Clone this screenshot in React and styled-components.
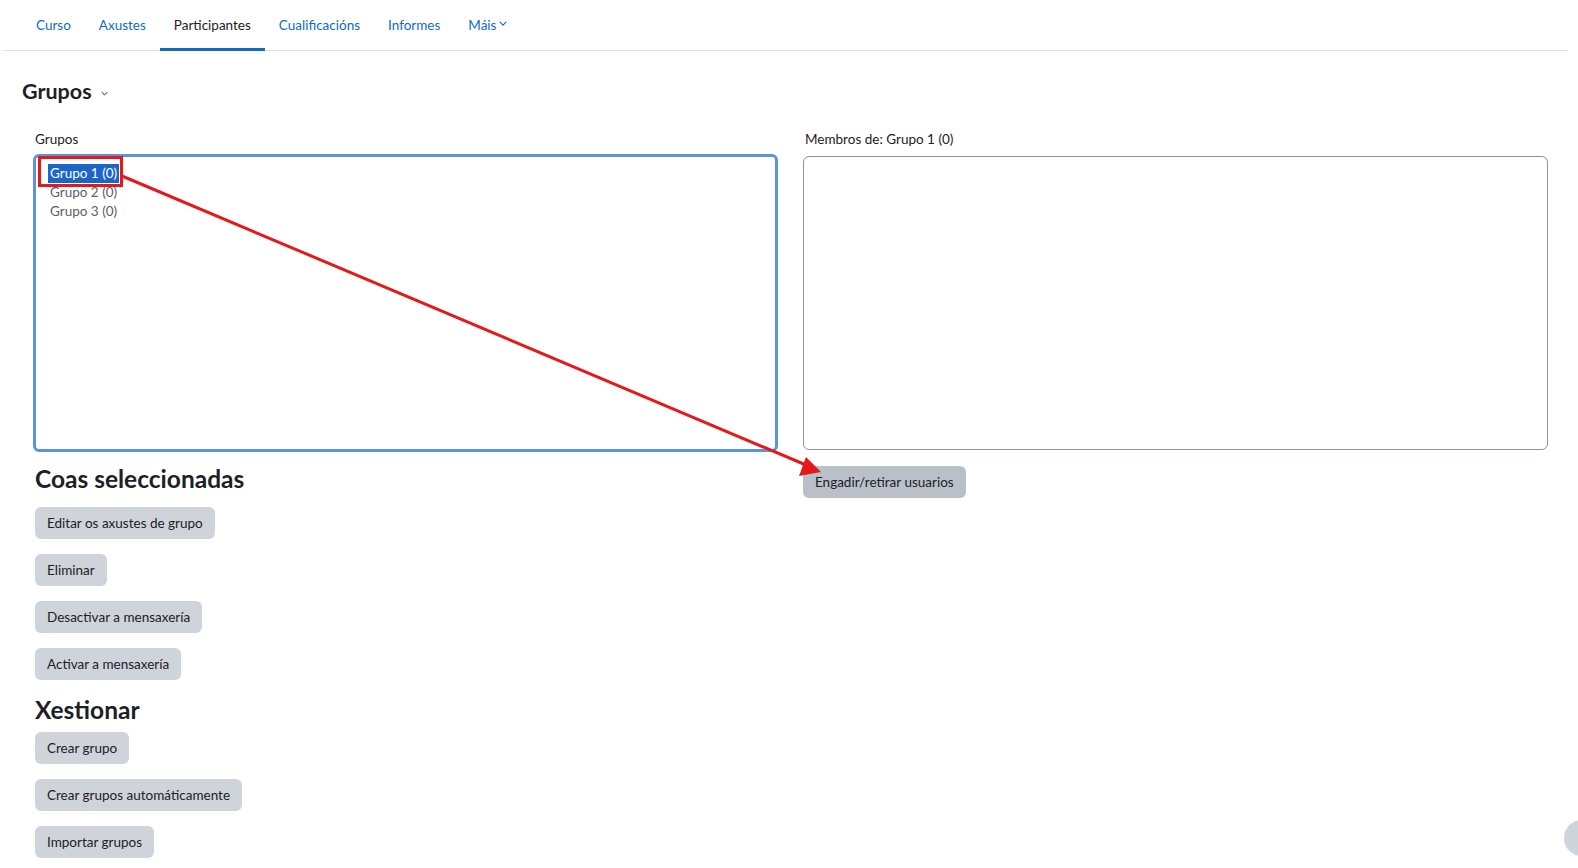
import React from "react";
import styled, { createGlobalStyle } from "styled-components";

const GlobalStyle = createGlobalStyle`
  html, body {
    margin: 0;
    padding: 0;
    background: #fff;
    overflow: hidden;
  }
  body {
    font-family: Lato, "Noto Sans", sans-serif;
    font-size: 13.5px;
    color: #1d2125;
  }
`;

const tabs = ["Curso", "Axustes", "Participantes", "Cualificacións", "Informes", "Máis"];
const groups = ["Grupo 1 (0)", "Grupo 2 (0)", "Grupo 3 (0)"];

const App = () => {
  return (
    <Page>
      <GlobalStyle />
      <Nav>
        {tabs.map((t) => (
          <Tab key={t} active={t === "Participantes"}>
            {t}
            {t === "Máis" && <Caret viewBox="0 0 10 6"><path d="M1 1l4 4 4-4" /></Caret>}
          </Tab>
        ))}
      </Nav>

      <Title>
        Grupos
        <TitleCaret viewBox="0 0 10 6"><path d="M1 1l4 4 4-4" /></TitleCaret>
      </Title>

      <Columns>
        <Column>
          <Label>Grupos</Label>
          <ListBox focused>
            {groups.map((g, i) => (
              <Option key={g} selected={i === 0}>{g}</Option>
            ))}
          </ListBox>

          <Heading>Coas seleccionadas</Heading>
          <Buttons>
            <Button>Editar os axustes de grupo</Button>
            <Button>Eliminar</Button>
            <Button>Desactivar a mensaxería</Button>
            <Button>Activar a mensaxería</Button>
          </Buttons>

          <Heading tight>Xestionar</Heading>
          <Buttons>
            <Button>Crear grupo</Button>
            <Button>Crear grupos automáticamente</Button>
            <Button>Importar grupos</Button>
          </Buttons>
        </Column>

        <Column>
          <Label>Membros de: Grupo 1 (0)</Label>
          <ListBox />
          <ActionRow>
            <Button dark>Engadir/retirar usuarios</Button>
          </ActionRow>
        </Column>
      </Columns>

      <Annotation viewBox="0 0 1578 868">
        <rect x="39.5" y="157.5" width="82" height="28" fill="none" stroke="#e3191c" strokeWidth="3" />
        <line x1="122" y1="176" x2="806" y2="465" stroke="#e3191c" strokeWidth="3" />
        <polygon points="821,472 799,476 806,457" fill="#e3191c" />
      </Annotation>

      <HelpBubble />
    </Page>
  );
};

const Page = styled.div`
  position: relative;
  width: 100%;
  height: 100vh;
  overflow: hidden;
`;

const Nav = styled.nav`
  display: flex;
  height: 51px;
  padding-left: 20px;
  margin: 0 10px 0 2px;
  border-bottom: 1px solid #dee2e6;
  box-sizing: border-box;
`;

const Tab = styled.a`
  display: flex;
  align-items: center;
  gap: 3px;
  padding: 0 14px;
  color: ${(p) => (p.active ? "#1d2125" : "#0f6cbf")};
  border-bottom: 3px solid ${(p) => (p.active ? "#0f6cbf" : "transparent")};
  margin-bottom: -1px;
  padding-top: 1px;
  cursor: pointer;
`;

const Caret = styled.svg`
  width: 8px;
  height: 5px;
  fill: none;
  stroke: #0f6cbf;
  stroke-width: 1.4;
  margin-top: -3px;
`;

const Title = styled.h2`
  display: flex;
  align-items: center;
  gap: 9px;
  margin: 27px 0 0 22px;
  font-size: 21.5px;
  font-weight: 700;
  height: 26px;
`;

const TitleCaret = styled.svg`
  width: 7px;
  height: 5px;
  fill: none;
  stroke: #1d2125;
  stroke-width: 1.4;
  margin-top: 4px;
`;

const Columns = styled.div`
  display: grid;
  grid-template-columns: 1fr 1fr;
  column-gap: 25px;
  padding: 0 30px 0 33px;
  margin-top: 26px;
`;

const Column = styled.div`
  display: flex;
  flex-direction: column;
  align-items: flex-start;
`;

const Label = styled.div`
  padding-left: 2px;
  height: 19px;
  line-height: 19px;
  margin-bottom: 5px;
`;

const ListBox = styled.div`
  box-sizing: border-box;
  width: 100%;
  height: ${(p) => (p.focused ? "298px" : "294px")};
  margin-top: ${(p) => (p.focused ? "0" : "2px")};
  border: ${(p) => (p.focused ? "3px solid #5b93dc" : "1px solid #8f959e")};
  border-radius: 6px;
  padding: ${(p) => (p.focused ? "7px 12px" : "9px 14px")};
  display: flex;
  flex-direction: column;
  align-items: flex-start;
`;

const Option = styled.div`
  height: 19px;
  line-height: 19px;
  padding: 0 2px;
  color: ${(p) => (p.selected ? "#fff" : "#5a6168")};
  background: ${(p) => (p.selected ? "#1a67c9" : "transparent")};
`;

const Heading = styled.h3`
  margin: ${(p) => (p.tight ? "16px 0 8px 2px" : "13px 0 14px 2px")};
  font-size: 24.5px;
  font-weight: 700;
  line-height: 28px;
`;

const Buttons = styled.div`
  display: flex;
  flex-direction: column;
  align-items: flex-start;
  gap: 15px;
  padding-left: 2px;
`;

const Button = styled.button`
  font-family: inherit;
  font-size: 13.5px;
  color: #1d2125;
  height: 32px;
  padding: 0 12px;
  border: none;
  border-radius: 6px;
  background: ${(p) => (p.dark ? "#b9c0c8" : "#ced4da")};
  cursor: pointer;
`;

const ActionRow = styled.div`
  margin-top: 16px;
`;

const Annotation = styled.svg`
  position: absolute;
  left: 0;
  top: 0;
  width: 1578px;
  height: 868px;
  pointer-events: none;
`;

const HelpBubble = styled.div`
  position: absolute;
  right: -22px;
  top: 820px;
  width: 36px;
  height: 36px;
  border-radius: 50%;
  background: #ced4da;
`;

export default App;
